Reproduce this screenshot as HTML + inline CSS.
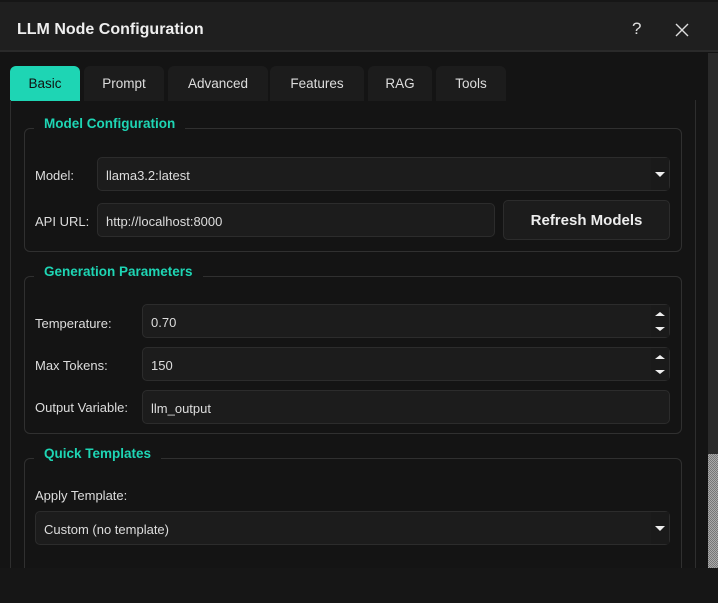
<!DOCTYPE html>
<html><head><style>
*{box-sizing:border-box;margin:0;padding:0}
body{width:718px;height:603px;background:#141414;font-family:"Liberation Sans",sans-serif;color:#ddd;position:relative;overflow:hidden;font-size:13px}
.abs{position:absolute}
.title{left:0;top:0;width:718px;height:52px;background:#1f1f1f;border-top:2px solid #161616;border-bottom:2px solid #2a2a2a}
.title .t{left:17px;top:19px;font-weight:bold;font-size:16px;color:#eee}
.tab{top:66px;height:35px;background:#1c1c1c;border-radius:6px 6px 0 0;color:#ddd;text-align:center;line-height:35px;font-size:13.5px}
.tab.on{background:#1ed5b4;color:#111}
.panel{left:10px;top:100px;width:686px;height:480px;border-left:1px solid #2e2e2e;border-right:1px solid #2e2e2e}
.gb{border:1px solid #303030;border-radius:6px}
.gt{background:#141414;color:#1ed5b4;font-weight:bold;font-size:13.5px;padding:0 10px}
.inp{background:#1c1c1c;border:1px solid #2c2c2c;border-radius:5px;color:#ddd;padding-left:8px;padding-top:1px;line-height:33px;font-size:13px}
.lbl{font-size:13px;color:#ddd}
.dd{position:absolute;right:0;top:0;width:18px;height:100%;background:#1a1a1a}
.tri{position:absolute;width:0;height:0;border-left:5px solid transparent;border-right:5px solid transparent}
</style></head><body>
<div class="abs title"><div class="abs t">LLM Node Configuration</div>
<div class="abs" style="left:632px;top:17px;font-size:17px;color:#ddd">?</div>
<svg class="abs" style="left:675px;top:21px" width="14" height="14"><path d="M1 1L13 13M13 1L1 13" stroke="#ddd" stroke-width="1.4"/></svg>
</div>
<div class="abs tab on" style="left:10px;width:70px">Basic</div>
<div class="abs tab" style="left:84px;width:80px">Prompt</div>
<div class="abs tab" style="left:168px;width:100px">Advanced</div>
<div class="abs tab" style="left:270px;width:94px">Features</div>
<div class="abs tab" style="left:368px;width:64px">RAG</div>
<div class="abs tab" style="left:436px;width:70px">Tools</div>
<div class="abs panel"></div>
<div class="abs" style="left:708px;top:53px;width:10px;height:515px;background:#2a2a2a"></div>
<div class="abs" style="left:708px;top:454px;width:10px;height:114px;background:repeating-conic-gradient(#aaa 0 25%,#777 0 50%) 0 0/2px 2px"></div>

<div class="abs gb" style="left:24px;top:128px;width:658px;height:124px"></div>
<div class="abs gt" style="left:34px;top:116px">Model Configuration</div>
<div class="abs lbl" style="left:35px;top:168px">Model:</div>
<div class="abs inp" style="left:97px;top:157px;width:573px;height:34px">llama3.2:latest<div class="dd"><div class="tri" style="left:4px;top:14px;border-top:5px solid #eee"></div></div></div>
<div class="abs lbl" style="left:35px;top:214px">API URL:</div>
<div class="abs inp" style="left:97px;top:203px;width:398px;height:34px">http://localhost:8000</div>
<div class="abs inp" style="left:503px;top:200px;width:167px;height:40px;padding:0;text-align:center;line-height:40px;font-weight:bold;font-size:15px;color:#eee">Refresh Models</div>

<div class="abs gb" style="left:24px;top:276px;width:658px;height:158px"></div>
<div class="abs gt" style="left:34px;top:264px">Generation Parameters</div>
<div class="abs lbl" style="left:35px;top:316px">Temperature:</div>
<div class="abs inp" style="left:142px;top:304px;width:528px;height:34px">0.70<div class="dd"><div class="tri" style="left:4px;top:7px;border-bottom:4px solid #eee"></div><div class="tri" style="left:4px;top:22px;border-top:4px solid #eee"></div></div></div>
<div class="abs lbl" style="left:35px;top:358px">Max Tokens:</div>
<div class="abs inp" style="left:142px;top:347px;width:528px;height:34px">150<div class="dd"><div class="tri" style="left:4px;top:7px;border-bottom:4px solid #eee"></div><div class="tri" style="left:4px;top:22px;border-top:4px solid #eee"></div></div></div>
<div class="abs lbl" style="left:35px;top:400px">Output Variable:</div>
<div class="abs inp" style="left:142px;top:390px;width:528px;height:34px">llm_output</div>

<div class="abs gb" style="left:24px;top:458px;width:658px;height:140px"></div>
<div class="abs gt" style="left:34px;top:446px">Quick Templates</div>
<div class="abs lbl" style="left:35px;top:488px">Apply Template:</div>
<div class="abs inp" style="left:35px;top:511px;width:635px;height:34px">Custom (no template)<div class="dd"><div class="tri" style="left:4px;top:14px;border-top:5px solid #eee"></div></div></div>
<div class="abs" style="left:0;top:568px;width:718px;height:35px;background:#161616"></div>
</body></html>
